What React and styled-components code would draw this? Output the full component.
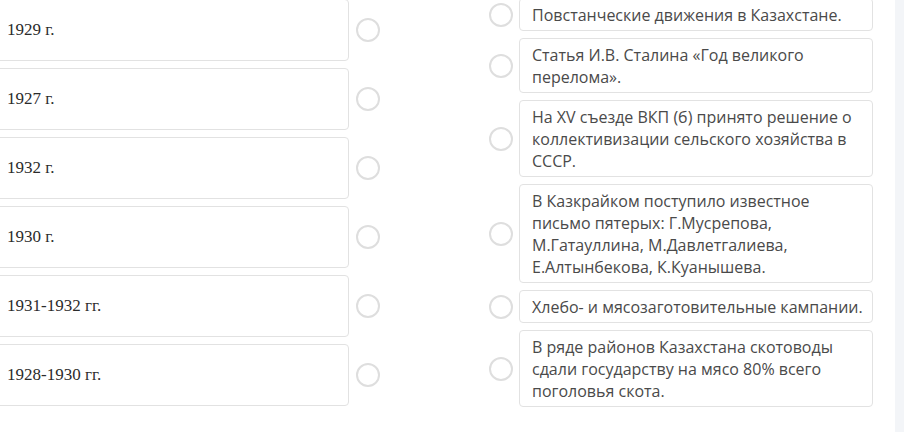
import React from 'react';
import styled, { createGlobalStyle } from 'styled-components';

const GlobalStyle = createGlobalStyle`
    html, body {
        margin: 0;
        padding: 0;
        background: #fff;
        overflow: hidden;
    }
`;

const Page = styled.div`
    width: 904px;
    height: 432px;
    display: flex;
    overflow: hidden;
    background: #fff;
`;

const LeftColumn = styled.div`
    display: flex;
    flex-direction: column;
    gap: 7px;
    margin-top: -1px;
    margin-left: -6px;
    width: 386px;
`;

const RightColumn = styled.div`
    display: flex;
    flex-direction: column;
    gap: 7px;
    margin-top: -2px;
    margin-left: 109px;
    width: 384px;
`;

const Strip = styled.div`
    margin-left: auto;
    width: 9px;
    background: #f3f5f8;
`;

const Row = styled.div`
    display: flex;
    align-items: center;
    gap: ${p => p.$gap}px;
`;

const DateBox = styled.div`
    box-sizing: border-box;
    width: 355px;
    height: 62px;
    border: 1px solid #e2e2e2;
    border-radius: 4px;
    padding: 0 12px;
    display: flex;
    align-items: center;
    font-family: "Liberation Serif", serif;
    font-size: 17px;
    color: #2b2b2b;
`;

const EventBox = styled.div`
    box-sizing: border-box;
    width: 355px;
    border: 1px solid #e2e2e2;
    border-radius: 4px;
    padding: 5px 5px 4px 12px;
    font-family: "Open Sans", sans-serif;
    font-size: 16px;
    line-height: 22px;
    color: #4a4a4a;
`;

const Radio = styled.div`
    box-sizing: border-box;
    flex: none;
    width: 24px;
    height: 24px;
    border: 2px solid #dedede;
    border-radius: 50%;
`;

const dates = ['1929 г.', '1927 г.', '1932 г.', '1930 г.', '1931-1932 гг.', '1928-1930 гг.'];

const events = [
    'Повстанческие движения в Казахстане.',
    'Статья И.В. Сталина «Год великого перелома».',
    'На XV съезде ВКП (б) принято решение о коллективизации сельского хозяйства в СССР.',
    'В Казкрайком поступило известное письмо пятерых: Г.Мусрепова, М.Гатауллина, М.Давлетгалиева, Е.Алтынбекова, К.Куанышева.',
    'Хлебо- и мясозаготовительные кампании.',
    'В ряде районов Казахстана скотоводы сдали государству на мясо 80% всего поголовья скота.',
];

export default function App() {
    return <Page>
        <GlobalStyle />
        <LeftColumn>
            {dates.map(d => (
                <Row key={d} $gap={7}>
                    <DateBox>{d}</DateBox>
                    <Radio />
                </Row>
            ))}
        </LeftColumn>
        <RightColumn>
            {events.map(e => (
                <Row key={e} $gap={6}>
                    <Radio />
                    <EventBox>{e}</EventBox>
                </Row>
            ))}
        </RightColumn>
        <Strip />
    </Page>
}
